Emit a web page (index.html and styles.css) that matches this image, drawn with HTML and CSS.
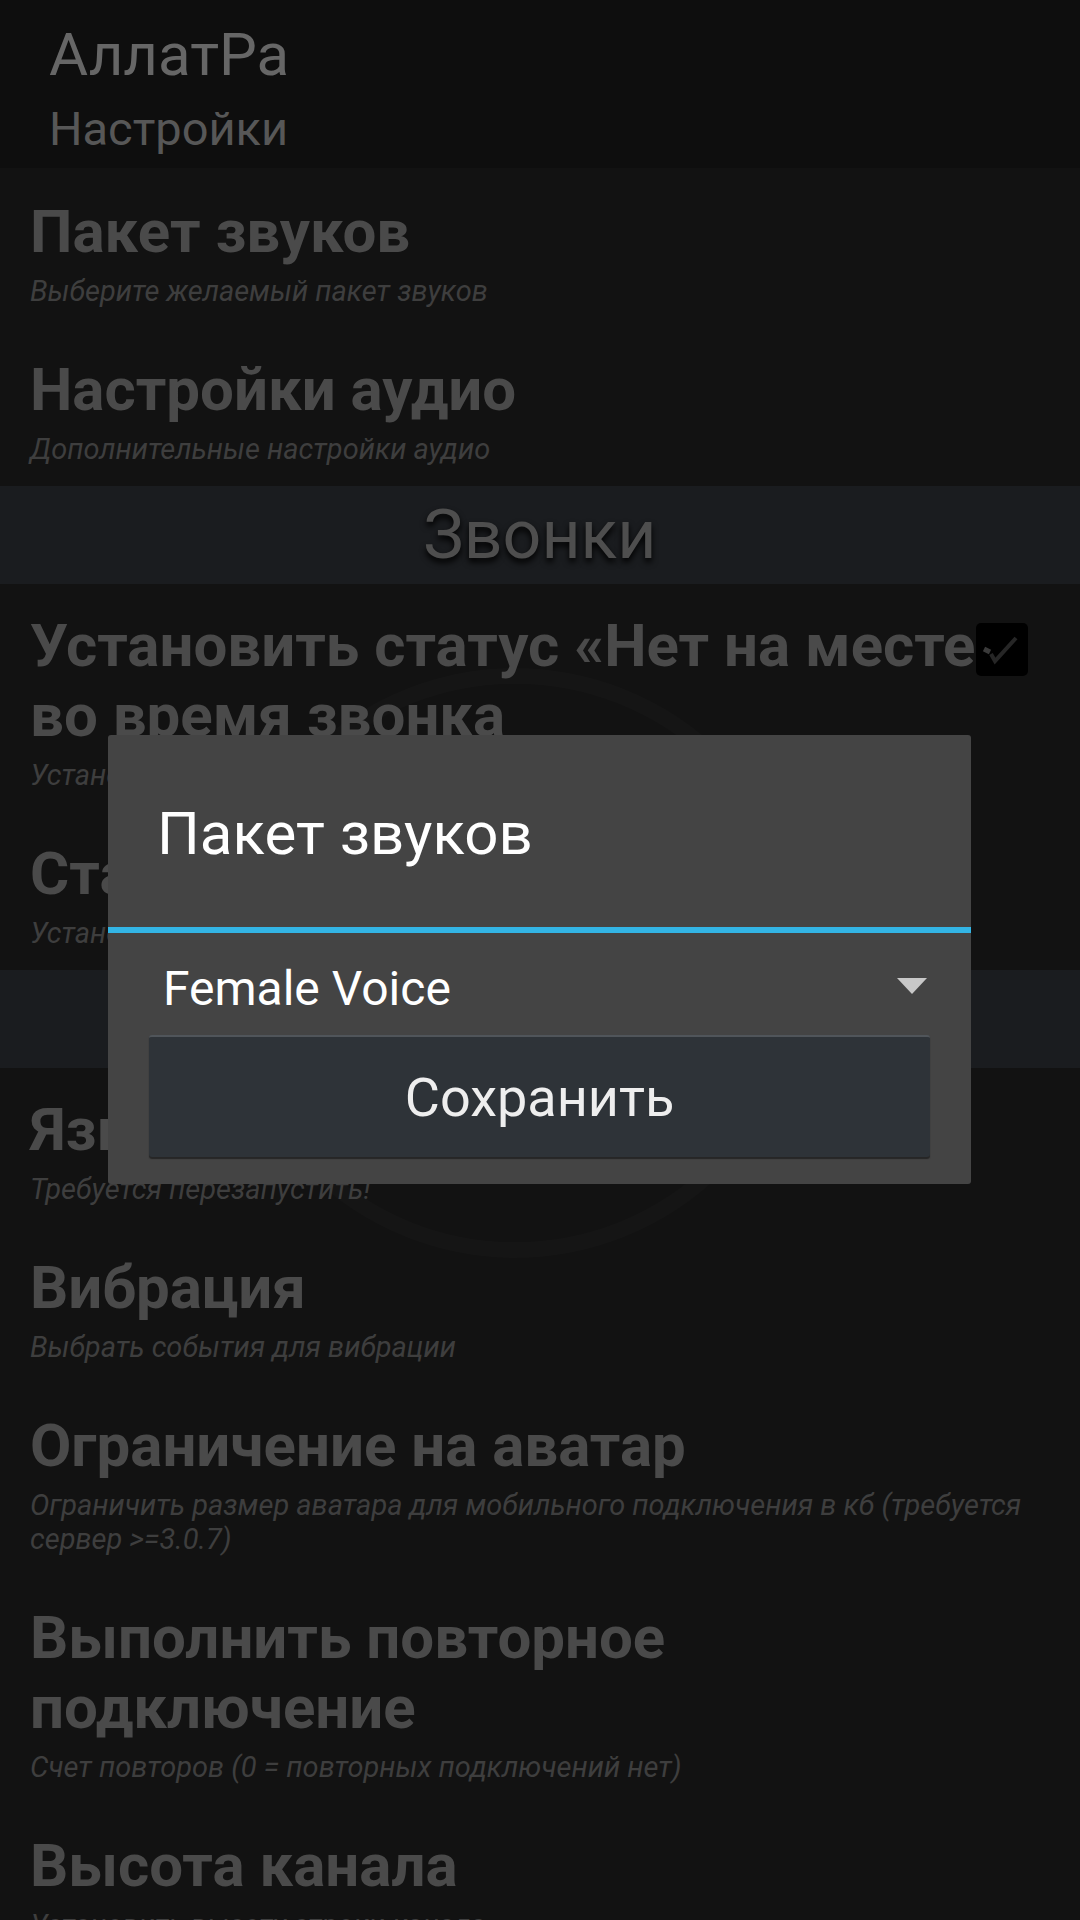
FILE: index.html
```html
<!DOCTYPE html>
<html lang="ru">
<head>
<meta charset="utf-8">
<title>АллатРа — Настройки</title>
<link rel="stylesheet" href="styles.css">
</head>
<body>
<div class="screen">
  <header class="appbar">
    <div class="app-title">АллатРа</div>
    <div class="app-sub">Настройки</div>
  </header>

  <main class="list">
    <div class="watermark"></div>

    <div class="pref">
      <div class="pref-text">
        <div class="pref-title">Пакет звуков</div>
        <div class="pref-sum">Выберите желаемый пакет звуков</div>
      </div>
    </div>
    <div class="pref">
      <div class="pref-text">
        <div class="pref-title">Настройки аудио</div>
        <div class="pref-sum">Дополнительные настройки аудио</div>
      </div>
    </div>

    <div class="section">Звонки</div>

    <div class="pref">
      <div class="pref-text">
        <div class="pref-title nowrap">Установить статус «Нет на месте<br>во время звонка</div>
        <div class="pref-sum">Установить статус «Нет на месте» во время звонка</div>
      </div>
      <div class="checkbox">
        <svg viewBox="0 0 52 53" width="52" height="53">
          <path d="M8 26 L14 29" fill="none" stroke="#3a3a3a" stroke-width="5"/>
          <path d="M15 31 L19 38 L40 15" fill="none" stroke="#262626" stroke-width="4"/>
        </svg>
      </div>
    </div>
    <div class="pref">
      <div class="pref-text">
        <div class="pref-title">Статус во время звонка</div>
        <div class="pref-sum">Установить текст статуса во время звонка</div>
      </div>
    </div>

    <div class="section">Общие</div>

    <div class="pref">
      <div class="pref-text">
        <div class="pref-title">Язык</div>
        <div class="pref-sum">Требуется перезапустить!</div>
      </div>
    </div>
    <div class="pref">
      <div class="pref-text">
        <div class="pref-title">Вибрация</div>
        <div class="pref-sum">Выбрать события для вибрации</div>
      </div>
    </div>
    <div class="pref">
      <div class="pref-text">
        <div class="pref-title">Ограничение на аватар</div>
        <div class="pref-sum">Ограничить размер аватара для мобильного подключения в кб (требуется сервер &gt;=3.0.7)</div>
      </div>
    </div>
    <div class="pref">
      <div class="pref-text">
        <div class="pref-title">Выполнить повторное<br>подключение</div>
        <div class="pref-sum">Счет повторов (0 = повторных подключений нет)</div>
      </div>
    </div>
    <div class="pref">
      <div class="pref-text">
        <div class="pref-title">Высота канала</div>
        <div class="pref-sum">Установить высоту строки канала</div>
      </div>
    </div>
  </main>

  <div class="dialog">
    <div class="dlg-title">Пакет звуков</div>
    <div class="dlg-divider"></div>
    <div class="spinner">
      <span class="spinner-text">Female Voice</span>
      <span class="spinner-arrow"></span>
    </div>
    <div class="dlg-actions">
      <button class="btn">Сохранить</button>
    </div>
  </div>
</div>
</body>
</html>
```

FILE: styles.css
```css
* { box-sizing: border-box; }
html, body { margin: 0; padding: 0; }
body {
  background: #121212;
  font-family: Roboto, "Noto Sans", "Liberation Sans", sans-serif;
}
.screen {
  position: relative;
  width: 1080px;
  height: 1920px;
  overflow: hidden;
  background: #121212;
}
.appbar {
  height: 168px;
  background: #0e0e0e;
  padding: 20px 0 0 49px;
}
.app-title {
  font-size: 60px;
  line-height: 70px;
  color: #666666;
}
.app-sub {
  margin-top: 14px;
  font-size: 47px;
  line-height: 50px;
  color: #575757;
}
.list {
  position: relative;
}
.watermark {
  position: absolute;
  left: 220px;
  top: 500px;
  width: 590px;
  height: 590px;
  border-radius: 50%;
  border: 16px solid rgba(255,255,255,0.014);
  pointer-events: none;
}
.pref {
  position: relative;
  display: flex;
  align-items: flex-start;
  padding: 27px 52px 20px 30px;
}
.watermark + .pref { padding-top: 29px; }
.pref-text {
  flex: 1;
  min-width: 0;
}
.pref-title {
  font-size: 60px;
  font-weight: bold;
  line-height: 70px;
  color: #4a4a4a;
}
.nowrap { white-space: nowrap; }
.pref-sum {
  margin-top: 7px;
  font-size: 29px;
  font-style: italic;
  line-height: 34px;
  color: #3e3e3e;
}
.checkbox {
  position: absolute;
  right: 52px;
  top: 39px;
  width: 52px;
  height: 53px;
  background: #000;
  border-radius: 5px;
}
.checkbox svg { display: block; }
.section {
  height: 98px;
  background: #1a1c1f;
  color: #4e4e4e;
  font-size: 68px;
  line-height: 98px;
  text-align: center;
  text-shadow: 0 4px 6px #000;
}
.dialog {
  position: absolute;
  left: 108px;
  top: 735px;
  width: 863px;
  height: 449px;
  background: #444444;
  border-radius: 3px;
  display: flex;
  flex-direction: column;
}
.dlg-title {
  height: 192px;
  padding: 64px 0 0 49px;
  font-size: 60px;
  line-height: 70px;
  color: #ffffff;
}
.dlg-divider {
  height: 6px;
  background: #33b5e5;
}
.spinner {
  height: 102px;
  display: flex;
  align-items: flex-start;
  justify-content: space-between;
  padding: 28px 44px 0 55px;
}
.spinner-text {
  font-size: 48px;
  line-height: 56px;
  color: #ffffff;
}
.spinner-arrow {
  margin-top: 17px;
  width: 0;
  height: 0;
  border-left: 15px solid transparent;
  border-right: 15px solid transparent;
  border-top: 16px solid #c8c8c8;
}
.dlg-actions {
  padding: 0 41px 27px 41px;
}
.btn {
  display: flex;
  align-items: center;
  justify-content: center;
  width: 100%;
  height: 122px;
  margin: 0;
  padding: 0;
  background: #2e3338;
  border: none;
  border-top: 2px solid #50555a;
  border-radius: 3px;
  box-shadow: 0 2px 1px #262626;
  font-family: Roboto, "Noto Sans", sans-serif;
  font-size: 54px;
  color: #eeeeee;
}
```
